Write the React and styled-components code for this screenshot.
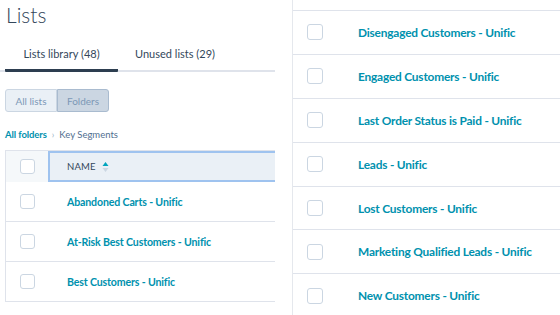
import React from 'react'
import styled, { createGlobalStyle } from 'styled-components'

const GlobalStyle = createGlobalStyle`
  html, body {
    margin: 0;
    padding: 0;
    background: #ffffff;
    overflow: hidden;
  }
  body {
    font-family: Lato, "Open Sans", sans-serif;
    color: #33475b;
  }
`

const leftLists = [
    'Abandoned Carts - Unific',
    'At-Risk Best Customers - Unific',
    'Best Customers - Unific',
]

const rightLists = [
    'Disengaged Customers - Unific',
    'Engaged Customers - Unific',
    'Last Order Status is Paid - Unific',
    'Leads - Unific',
    'Lost Customers - Unific',
    'Marketing Qualified Leads - Unific',
    'New Customers - Unific',
]

const Page = styled.div`
  display: flex;
  width: 560px;
  height: 315px;
  overflow: hidden;
`

const LeftPanel = styled.div`
  width: 275px;
  flex-shrink: 0;
  display: flex;
  flex-direction: column;
`

const Title = styled.h1`
  margin: 0;
  padding: 2px 0 0 6px;
  font-size: 21px;
  line-height: 26px;
  font-weight: 300;
  color: #33475b;
`

const Tabs = styled.div`
  display: flex;
  margin-top: 14px;
  border-bottom: 2px solid #dfe3eb;
`

const Tab = styled.div`
  width: ${p => p.$width}px;
  margin-left: ${p => p.$offset || 0}px;
  padding: 5px 0 8px;
  text-align: center;
  font-size: 11px;
  line-height: 14px;
  color: #33475b;
  margin-bottom: -2px;
  border-bottom: 3px solid ${p => (p.$active ? '#2d3e50' : 'transparent')};
  border-radius: 1px;
`

const Toggle = styled.div`
  display: flex;
  margin: 17px 0 0 5px;
`

const ToggleButton = styled.div`
  width: 50px;
  height: 21px;
  display: flex;
  align-items: center;
  justify-content: center;
  font-size: 10px;
  color: #7c98b6;
  background: ${p => (p.$active ? '#cbd6e2' : '#eaf0f6')};
  border: 1px solid ${p => (p.$active ? '#a9bbcf' : '#cbd6e2')};
  border-radius: ${p => (p.$first ? '3px 0 0 3px' : '0 3px 3px 0')};
`

const Crumbs = styled.div`
  display: flex;
  align-items: center;
  gap: 5px;
  margin: 16px 0 0 5px;
  font-size: 9.5px;
  line-height: 14px;
  color: #516f90;
`

const CrumbLink = styled.span`
  color: #0091ae;
  font-weight: 700;
  letter-spacing: -0.1px;
`

const Sep = styled.span`
  font-size: 9px;
  color: #99afc4;
`

const Table = styled.div`
  margin: 8px 0 0 5px;
  border-left: 1px solid #dfe3eb;
`

const HeadRow = styled.div`
  display: flex;
  height: 31px;
  background: #f5f8fa;
  border-top: 1px solid #dfe3eb;
`

const CheckCell = styled.div`
  width: ${p => p.$w}px;
  flex-shrink: 0;
  display: flex;
  align-items: center;
  justify-content: center;
`

const NameHead = styled.div`
  flex: 1;
  display: flex;
  align-items: center;
  gap: 6px;
  padding-left: 17px;
  background: #eaf0f6;
  border: 2px solid #9fc3ef;
  border-right: none;
  font-size: 9.5px;
  letter-spacing: 0.2px;
  color: #33475b;
`

const Row = styled.div`
  display: flex;
  align-items: center;
  box-sizing: border-box;
  height: ${p => p.$h}px;
  border-bottom: 1px solid #dfe3eb;
`

const Box = styled.span`
  display: block;
  width: ${p => p.$size}px;
  height: ${p => p.$size}px;
  box-sizing: border-box;
  border: 1.5px solid #cbd6e2;
  border-radius: 3px;
  background: #ffffff;
`

const ListName = styled.span`
  font-size: ${p => p.$size}px;
  font-weight: 700;
  letter-spacing: ${p => p.$track}px;
  color: #0091ae;
  white-space: nowrap;
  padding-left: ${p => p.$pad}px;
`

const Gap = styled.div`
  width: 17px;
  flex-shrink: 0;
`

const RightPanel = styled.div`
  flex: 1;
  border-left: 1px solid #e5e8ed;
  padding-top: 10px;
`

const RightList = styled.div`
  border-top: 1px solid #dfe3eb;
`

function SortIcon() {
    return (
        <svg width="7" height="12" viewBox="0 0 7 12">
            <path d="M3.5 1 L6.5 5 H0.5 Z" fill="#00a4bd" />
            <path d="M3.5 11 L6.5 7 H0.5 Z" fill="#cbd6e2" />
        </svg>
    )
}

export default function App() {
    return (
        <Page>
            <GlobalStyle />
            <LeftPanel>
                <Title>Lists</Title>
                <Tabs>
                    <Tab $active $width={113} $offset={5}>Lists library (48)</Tab>
                    <Tab $width={114}>Unused lists (29)</Tab>
                </Tabs>
                <Toggle>
                    <ToggleButton $first>All lists</ToggleButton>
                    <ToggleButton $active>Folders</ToggleButton>
                </Toggle>
                <Crumbs>
                    <CrumbLink>All folders</CrumbLink>
                    <Sep>›</Sep>
                    <span>Key Segments</span>
                </Crumbs>
                <Table>
                    <HeadRow>
                        <CheckCell $w={42}><Box $size={15} /></CheckCell>
                        <NameHead>NAME <SortIcon /></NameHead>
                    </HeadRow>
                    {leftLists.map(name => (
                        <Row key={name} $h={40}>
                            <CheckCell $w={42}><Box $size={15} /></CheckCell>
                            <ListName $size={10.6} $track={-0.15} $pad={19}>{name}</ListName>
                        </Row>
                    ))}
                </Table>
            </LeftPanel>
            <Gap />
            <RightPanel>
                <RightList>
                    {rightLists.map(name => (
                        <Row key={name} $h={43.9}>
                            <CheckCell $w={43}><Box $size={16} /></CheckCell>
                            <ListName $size={11.9} $track={-0.2} $pad={22}>{name}</ListName>
                        </Row>
                    ))}
                </RightList>
            </RightPanel>
        </Page>
    )
}
